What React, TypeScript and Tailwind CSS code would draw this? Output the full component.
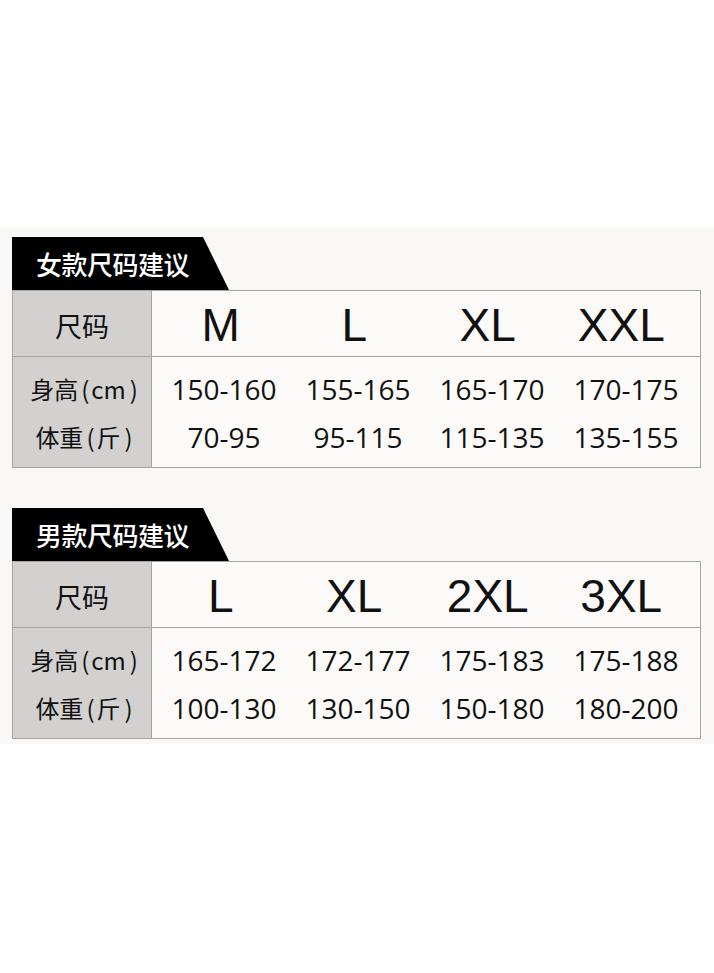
import React from "react";

type SizeTable = {
  title: string;
  sizes: string[];
  heights: string[];
  weights: string[];
};

const tables: SizeTable[] = [
  {
    title: "女款尺码建议",
    sizes: ["M", "L", "XL", "XXL"],
    heights: ["150-160", "155-165", "165-170", "170-175"],
    weights: ["70-95", "95-115", "115-135", "135-155"],
  },
  {
    title: "男款尺码建议",
    sizes: ["L", "XL", "2XL", "3XL"],
    heights: ["165-172", "172-177", "175-183", "175-188"],
    weights: ["100-130", "130-150", "150-180", "180-200"],
  },
];

const cjk = "font-['Noto_Sans_CJK_SC',sans-serif]";
const num = "font-['Open_Sans','Noto_Sans',sans-serif]";

const Label = ({ main, unit }: { main: string; unit: string }) => (
  <div className="h-[48px] flex items-center justify-center">
    {main}
    <span className="ml-[3px] mr-[2px]">(</span>
    {unit}
    <span className="ml-[4px]">)</span>
  </div>
);

const SizeBlock = ({ data }: { data: SizeTable }) => (
  <div className="flex flex-col">
    {/* black tab, slanted on the right */}
    <div className="h-[53px] w-[217px] bg-black [clip-path:polygon(0_0,191px_0,100%_100%,0_100%)] flex items-center pl-[24px]">
      <span className={`${cjk} text-white text-[26px] font-medium leading-none tracking-[-0.5px]`}>
        {data.title}
      </span>
    </div>
    <div className="w-[689px] border border-[#a8a39e] bg-[#fbfaf8]">
      <div className="flex h-[66px] border-b border-[#a8a39e]">
        <div className={`${cjk} w-[139px] shrink-0 bg-[#d3d1cf] border-r border-[#a8a39e] flex items-center justify-center pt-[6px] text-[27px] text-[#111]`}>
          尺码
        </div>
        <div className="flex-1 grid grid-cols-4 pl-[2px] pr-[12px] pt-[2px]">
          {data.sizes.map((s) => (
            <div
              key={s}
              className="flex items-center justify-center font-['Liberation_Sans',Arial,sans-serif] text-[46px] leading-none text-[#111]"
            >
              {s}
            </div>
          ))}
        </div>
      </div>
      <div className="flex h-[110px]">
        <div className={`${cjk} w-[139px] shrink-0 bg-[#d3d1cf] border-r border-[#a8a39e] flex flex-col pt-[8px] pl-[4px] text-[24px] text-[#111]`}>
          <Label main="身高" unit="cm" />
          <Label main="体重" unit="斤" />
        </div>
        <div className="flex-1 flex flex-col pt-[8px] pl-[5px] pr-[7px]">
          <div className="grid grid-cols-4 h-[48px]">
            {data.heights.map((h, i) => (
              <div key={i} className={`${num} flex items-center justify-center text-[28px] text-[#111]`}>
                {h}
              </div>
            ))}
          </div>
          <div className="grid grid-cols-4 h-[48px]">
            {data.weights.map((w, i) => (
              <div key={i} className={`${num} flex items-center justify-center text-[28px] text-[#111]`}>
                {w}
              </div>
            ))}
          </div>
        </div>
      </div>
    </div>
  </div>
);

export default function App() {
  return (
    <div className="w-[714px] h-[973px] bg-white">
      <div className="h-[227px]" />
      <div className="bg-[#f9f8f6] pt-[10px] pb-[5px] pl-[12px] flex flex-col gap-[40px]">
        {tables.map((t) => (
          <SizeBlock key={t.title} data={t} />
        ))}
      </div>
    </div>
  );
}
